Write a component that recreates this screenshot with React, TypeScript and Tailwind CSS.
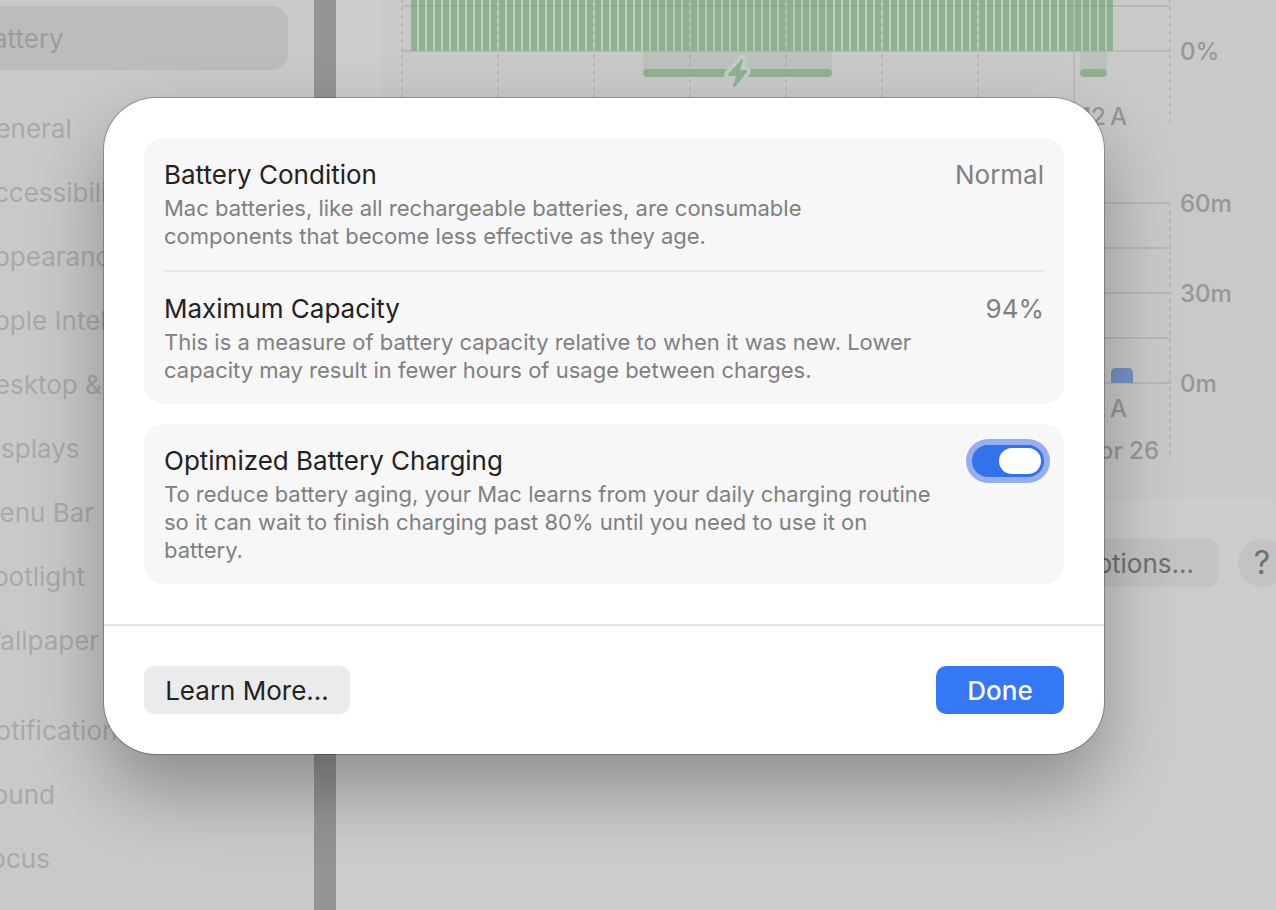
import { useId, useState } from "react";
import type { ReactNode } from "react";

const navGroups = [
  ["Battery"],
  [
    "General",
    "Accessibility",
    "Appearance",
    "Apple Intelligence & Siri",
    "Desktop & Dock",
    "Displays",
    "Menu Bar",
    "Spotlight",
    "Wallpaper",
  ],
  ["Notifications", "Sound", "Focus"],
];

// 88 quarter-hour samples, 8px apart
const samples = Array.from({ length: 88 }, (_, i) => 9 + i * 8);
// dashed guides every three hours
const guides = [0, 96, 192, 288, 384, 480, 576, 768];
// when the charger was plugged in
const chargingSpans = [
  { x: 241, width: 189 },
  { x: 678, width: 27 },
];

const Sidebar = () => (
  <nav className="-ml-6 flex w-[338px] shrink-0 flex-col gap-[26px] overflow-hidden bg-[#c9c9c9] pt-1.5 text-[26px]">
    {navGroups.map((group) => (
      <ul key={group[0]} className="w-[312px]">
        {group.map((name) => (
          <li key={name}>
            <a
              href="#"
              className={
                name === "Battery"
                  ? "flex h-16 items-center whitespace-nowrap rounded-2xl bg-[#bcbcbc] text-[#9c9c9c]"
                  : "flex h-16 items-center whitespace-nowrap text-[#a9a9a9]"
              }
            >
              {name}
            </a>
          </li>
        ))}
      </ul>
    ))}
  </nav>
);

const LevelChart = () => (
  <svg width="860" height="140" className="block shrink-0 overflow-visible" role="img" aria-label="Battery level">
    <path d="M0 6H768M0 51H768" stroke="#b8b8b8" strokeWidth="2" />
    <rect x="9" width="702" height="51" fill="#bfd0bc" />
    {chargingSpans.map((span) => (
      <rect key={span.x} x={span.x} width={span.width} height="72" fill="#8fb192" fillOpacity="0.25" />
    ))}
    {samples.map((x) => (
      <rect key={x} x={x} width="6" height="51" fill="#8fb192" />
    ))}
    <path d="M9 6H711" stroke="#000" strokeOpacity="0.04" strokeWidth="2" />
    {guides.map((x) => (
      <path key={x} d={`M${x} -1V127`} stroke="#000" strokeOpacity="0.08" strokeWidth="2" strokeDasharray="4 4" />
    ))}
    <path d="M672 0V127" stroke="#000" strokeOpacity="0.08" strokeWidth="2" />
    {chargingSpans.map((span) => (
      <rect key={span.x} x={span.x} y="69" width={span.width} height="8" rx="4" fill="#8fb192" />
    ))}
    <path
      d="M340 59 326 74Q325 76 327 76H334L331 86Q331 88 333 87L345 72Q346 70 344 70H338L341 60Q341 58 340 59Z"
      fill="#8fb192"
      stroke="#c6cbc5"
      strokeWidth="7"
      strokeLinejoin="round"
      paintOrder="stroke"
    />
    <g fill="#979797" fontSize="24" fontWeight="500">
      <text x="725" y="125" textAnchor="end">{"12\u2009A"}</text>
      <text x="778" y="60">0%</text>
    </g>
  </svg>
);

const UsageChart = () => (
  <svg width="860" height="280" className="block shrink-0" role="img" aria-label="Screen on usage">
    <path d="M0 13H768M0 58H768M0 103H768M0 148H768M0 193H768" stroke="#b8b8b8" strokeWidth="2" />
    <path d="M768 13V270" stroke="#b8b8b8" strokeWidth="2" strokeDasharray="4 4" />
    <path d="M709 193V183Q709 178 714 178H726Q731 178 731 183V193Z" fill="#7593c4" />
    <g fill="#979797" fontSize="24" fontWeight="500">
      <text x="725" y="227" textAnchor="end">{"12\u2009A"}</text>
      <text x="757" y="269" textAnchor="end">Apr 26</text>
      <text x="778" y="22">60m</text>
      <text x="778" y="112">30m</text>
      <text x="778" y="202">0m</text>
    </g>
  </svg>
);

const SettingsWindow = () => (
  <div className="flex min-h-screen">
    <Sidebar />
    <div className="w-[22px] shrink-0 bg-[#949494]" />
    <main className="-mr-2.5 min-w-0 flex-1 bg-[#cccccc] pl-[46px]">
      <section className="flex h-[499px] flex-col gap-[50px] overflow-hidden rounded-b-[20px] bg-[#c9c9c9] pl-5">
        <LevelChart />
        <UsageChart />
      </section>
      <div className="mt-10 flex justify-end gap-5 text-[26px] text-[#707070]">
        <button type="button" className="h-12 rounded-[10px] bg-[#c3c3c3] px-6">
          Options...
        </button>
        <button type="button" className="size-12 rounded-full bg-[#c3c3c3] text-[32px] leading-none">
          ?
        </button>
      </div>
    </main>
  </div>
);

type RowProps = {
  title: string;
  detail: string;
  htmlFor?: string;
  children: ReactNode;
};

const Row = ({ title, detail, htmlFor, children }: RowProps) => (
  <div className="flex items-start gap-8 py-5">
    <div className="min-w-0 flex-1">
      <h2 className="text-[26px] leading-[34px] text-[#222222]">
        {htmlFor ? <label htmlFor={htmlFor}>{title}</label> : title}
      </h2>
      <p className="mt-0.5 text-[22px] leading-7 text-[#808080]">{detail}</p>
    </div>
    <div className="flex h-[34px] items-center text-[26px] leading-[34px] text-[#808080]">{children}</div>
  </div>
);

const BatteryHealthDialog = () => {
  const [optimized, setOptimized] = useState(true);
  const switchId = useId();

  return (
    <div
      role="dialog"
      aria-modal="true"
      aria-label="Battery Health"
      className="min-w-0 flex-1 rounded-[52px] bg-white shadow-[0_0_0_1px_rgba(0,0,0,0.25),0_36px_72px_rgba(0,0,0,0.3)]"
    >
      <div className="flex flex-col gap-5 p-10">
        <section className="divide-y-2 divide-[#e9e9e9] rounded-[20px] bg-[#f7f7f7] px-5">
          <Row
            title="Battery Condition"
            detail="Mac batteries, like all rechargeable batteries, are consumable components that become less effective as they age."
          >
            Normal
          </Row>
          <Row
            title="Maximum Capacity"
            detail="This is a measure of battery capacity relative to when it was new. Lower capacity may result in fewer hours of usage between charges."
          >
            94%
          </Row>
        </section>
        <section className="rounded-[20px] bg-[#f7f7f7] px-5">
          <Row
            title="Optimized Battery Charging"
            detail="To reduce battery aging, your Mac learns from your daily charging routine so it can wait to finish charging past 80% until you need to use it on battery."
            htmlFor={switchId}
          >
            <input
              id={switchId}
              type="checkbox"
              role="switch"
              checked={optimized}
              onChange={(e) => setOptimized(e.target.checked)}
              className="flex h-8 w-[72px] appearance-none items-center rounded-full bg-[#c8c8c8] px-[3px] ring-6 ring-[#94aeef] before:h-[26px] before:w-[42px] before:rounded-full before:bg-white checked:justify-end checked:bg-[#3273ec]"
            />
          </Row>
        </section>
      </div>
      <div className="flex justify-between border-t-2 border-[#e5e5e5] p-10 text-[26px]">
        <button type="button" className="h-12 w-[206px] rounded-[10px] bg-[#ebebeb] text-[#222222]">
          Learn More...
        </button>
        <button type="button" className="h-12 w-32 rounded-[10px] bg-[#3478f6] font-medium text-white">
          Done
        </button>
      </div>
    </div>
  );
};

const App = () => (
  <div className="relative min-h-screen overflow-hidden bg-[#cccccc] font-['Inter',sans-serif]">
    <SettingsWindow />
    <div className="absolute inset-0 flex items-start pt-[98px] pr-[172px] pl-[104px]">
      <BatteryHealthDialog />
    </div>
  </div>
);

export default App;
